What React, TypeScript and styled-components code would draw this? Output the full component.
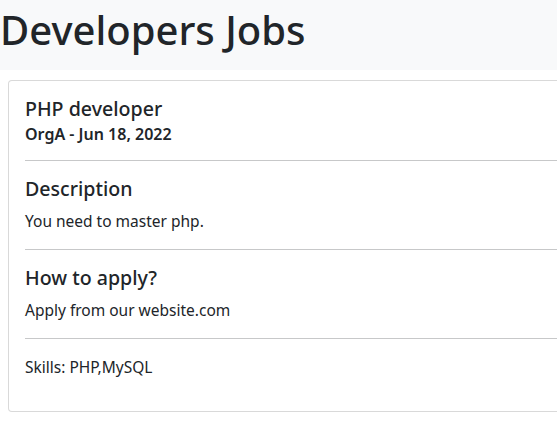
import styled, { createGlobalStyle } from "styled-components";

const GlobalStyle = createGlobalStyle`
  html, body {
    margin: 0;
    padding: 0;
    background: #ffffff;
    overflow-x: hidden;
  }
  body {
    font-family: "Noto Sans", "Open Sans", sans-serif;
    font-size: 16px;
    line-height: 1.5;
    color: #212529;
  }
  * {
    box-sizing: border-box;
  }
`;

const Header = styled.header`
  background-color: #f8f9fa;
  padding: 6px 0 16px;
`;

const PageTitle = styled.h1`
  margin: 0;
  font-size: 40px;
  font-weight: 500;
  line-height: 48px;
`;

const Main = styled.main`
  padding: 10px 0 0 8px;
`;

const Card = styled.div`
  width: 640px;
  border: 1px solid rgba(0, 0, 0, 0.15);
  border-radius: 4px;
  background: #fff;
`;

const CardBody = styled.div`
  padding: 16px;
`;

const Heading = styled.h5<{ $tight?: boolean }>`
  margin: 0 0 ${(p) => (p.$tight ? "4px" : "8px")};
  font-size: 19.6px;
  font-weight: 500;
  line-height: 24px;
`;

const Subtitle = styled.h6`
  margin: 0;
  font-size: 16px;
  font-weight: 600;
  line-height: 19px;
`;

const Text = styled.p`
  margin: 0 0 16px;
  font-size: 15.5px;
  line-height: 24px;
`;

const Rule = styled.hr`
  margin: 16px 0;
  border: 0;
  border-top: 1px solid #212529;
  opacity: 0.25;
`;

export default function App() {
  return (
    <>
      <GlobalStyle />
      <Header>
        <PageTitle>Developers Jobs</PageTitle>
      </Header>
      <Main>
        <Card>
          <CardBody>
            <Heading $tight>PHP developer</Heading>
            <Subtitle>OrgA - Jun 18, 2022</Subtitle>
            <Rule />
            <Heading>Description</Heading>
            <Text>You need to master php.</Text>
            <Rule />
            <Heading>How to apply?</Heading>
            <Text>Apply from our website.com</Text>
            <Rule />
            <Text>Skills: PHP,MySQL</Text>
          </CardBody>
        </Card>
      </Main>
    </>
  );
}
